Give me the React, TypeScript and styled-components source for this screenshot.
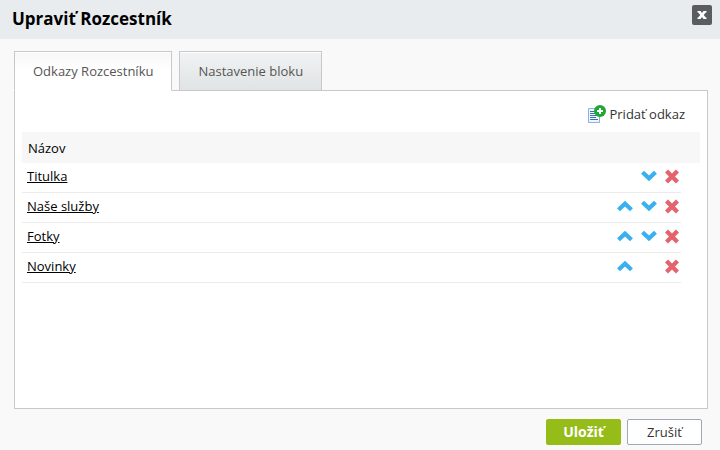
import React, { useState } from "react";
import styled, { createGlobalStyle } from "styled-components";

const GlobalStyle = createGlobalStyle`
  *, *::before, *::after { box-sizing: border-box; }
  body {
    margin: 0;
    background: #f9f9f9;
    color: #000;
    font: 13px/20px "Open Sans", "Noto Sans", sans-serif;
  }
  button { font: inherit; cursor: pointer; }
`;

const Dialog = styled.div`
  display: flex;
  flex-direction: column;
  min-height: 100vh;
`;

const Header = styled.header`
  display: flex;
  align-items: flex-start;
  justify-content: space-between;
  height: 39px;
  padding: 5px 8px 0 12px;
  background: #e8ecef;
`;

const Title = styled.h1`
  margin: 0;
  font-size: 17px;
  line-height: 28px;
  font-weight: 700;
`;

const IconButton = styled.button`
  display: flex;
  align-items: center;
  justify-content: center;
  padding: 0;
  border: 0;
  background: none;
`;

const CloseButton = styled(IconButton)`
  width: 20px;
  height: 20px;
  border-radius: 2px;
  background: #595d60;
`;

const Main = styled.main`
  display: flex;
  flex: 1;
  flex-direction: column;
  padding: 12px 12px 0 14px;
`;

const Tabs = styled.div`
  display: flex;
  gap: 7px;
`;

const Tab = styled.button<{ $active: boolean }>`
  z-index: 1;
  height: 40px;
  margin: 0 0 -1px;
  padding: 0 18px;
  border: 1px solid #c8c8c8;
  border-bottom-color: ${(p) => (p.$active ? "#fff" : "#c8c8c8")};
  background: ${(p) =>
    p.$active
      ? "linear-gradient(#f7f7f7, #fff 50%)"
      : "linear-gradient(#f1f2f3, #e0e4e5)"};
  box-shadow: inset 0 1px #fff;
  color: #555;
`;

const Panel = styled.section`
  flex: 1;
  padding: 12px 7px;
  border: 1px solid #c8c8c8;
  background: #fff;
`;

const Toolbar = styled.div`
  display: flex;
  justify-content: flex-end;
  padding: 0 15px 7px 0;
`;

const AddButton = styled(IconButton)`
  gap: 3px;
  height: 22px;
  color: #333;
`;

const Table = styled.table`
  width: 100%;
  border-collapse: separate;
  border-spacing: 0;
`;

const HeadCell = styled.th`
  height: 31px;
  padding: 0 6px;
  background: #f7f7f7;
  font-weight: 400;
  text-align: left;
`;

const Cell = styled.td`
  height: 30px;
  padding: 0 0 4px 5px;
  border-bottom: 1px solid #ebebeb;
`;

const ActionCell = styled(Cell)`
  width: 72px;
  padding: 0 2px 4px 0;
`;

const GutterCell = styled.td`
  width: 19px;
  padding: 0;
`;

const ItemLink = styled.a`
  color: #000;
  text-decoration: underline;
`;

const Actions = styled.div`
  display: grid;
  grid-template-columns: 16px 16px 14px;
  gap: 8px;
  justify-content: end;
`;

const ActionButton = styled(IconButton)<{ $column: number }>`
  grid-column: ${(p) => p.$column};
  grid-row: 1;
  height: 20px;
`;

const Footer = styled.footer`
  display: flex;
  justify-content: flex-end;
  gap: 6px;
  padding: 10px 18px 5px;
`;

const FooterButton = styled.button<{ $primary?: boolean }>`
  min-width: 75px;
  height: 26px;
  padding: 0 12px;
  border: 1px solid ${(p) => (p.$primary ? "#95bc19" : "#a1a7b4")};
  border-radius: 2px;
  background: ${(p) => (p.$primary ? "#95bc19" : "#fff")};
  color: ${(p) => (p.$primary ? "#fff" : "#333")};
  font-size: ${(p) => (p.$primary ? "14px" : "13px")};
  font-weight: ${(p) => (p.$primary ? 700 : 400)};
`;

const CloseIcon = () => (
  <svg width="10" height="8" viewBox="0 0 10 8" aria-hidden="true">
    <path d="M.5 0h3L5 1.9 6.5 0h3v1.5h-.7L6.7 4l2.1 2.5h.7V8h-3L5 6.1 3.5 8h-3V6.5h.7L3.3 4 1.2 1.5H.5z" fill="#fff" />
  </svg>
);

const Chevron = ({ up }: { up?: boolean }) => (
  <svg width="16" height="12" viewBox="0 0 16 12" aria-hidden="true">
    <path
      d={up ? "M1.5 9.7 8 3.6l6.5 6.1" : "M1.5 2.3 8 8.4l6.5-6.1"}
      fill="none"
      stroke="#3bb0f0"
      strokeWidth="4.2"
    />
  </svg>
);

const DeleteIcon = () => (
  <svg width="14" height="16" viewBox="0 0 14 16" aria-hidden="true">
    <path d="m1.5 3 11 11m0-11-11 11" fill="none" stroke="#e4636d" strokeWidth="4.4" />
  </svg>
);

const AddLinkIcon = () => (
  <svg width="19" height="20" viewBox="0 0 19 20" aria-hidden="true">
    <path d="M1.5 4.5h11v14h-11z" fill="#eef6ff" stroke="#8ab1df" />
    <path d="M3 7.5h6M3 9.5h5M3 11.5h8M3 13.5h6M3 15.5h8" stroke="#426dae" />
    <circle cx="13" cy="7" r="6" fill="#1fa734" />
    <path d="M13 4v6M10 7h6" stroke="#fff" strokeWidth="2" />
  </svg>
);

const tabs = ["Odkazy Rozcestníku", "Nastavenie bloku"];
const items = ["Titulka", "Naše služby", "Fotky", "Novinky"];

export default function App() {
  const [active, setActive] = useState(0);
  return (
    <>
      <GlobalStyle />
      <Dialog role="dialog" aria-labelledby="dialog-title">
        <Header>
          <Title id="dialog-title">Upraviť Rozcestník</Title>
          <CloseButton type="button" aria-label="Zavrieť">
            <CloseIcon />
          </CloseButton>
        </Header>
        <Main>
          <Tabs role="tablist">
            {tabs.map((label, i) => (
              <Tab
                key={label}
                type="button"
                role="tab"
                aria-selected={active === i}
                $active={active === i}
                onClick={() => setActive(i)}
              >
                {label}
              </Tab>
            ))}
          </Tabs>
          <Panel role="tabpanel" aria-label={tabs[active]}>
            <Toolbar>
              <AddButton type="button">
                <AddLinkIcon />
                Pridať odkaz
              </AddButton>
            </Toolbar>
            <Table>
              <thead>
                <tr>
                  <HeadCell colSpan={3}>Názov</HeadCell>
                </tr>
              </thead>
              <tbody>
                {items.map((name, i) => (
                  <tr key={name}>
                    <Cell>
                      <ItemLink href="#">{name}</ItemLink>
                    </Cell>
                    <ActionCell>
                      <Actions>
                        {i > 0 && (
                          <ActionButton type="button" $column={1} aria-label={`Posunúť vyššie: ${name}`}>
                            <Chevron up />
                          </ActionButton>
                        )}
                        {i < items.length - 1 && (
                          <ActionButton type="button" $column={2} aria-label={`Posunúť nižšie: ${name}`}>
                            <Chevron />
                          </ActionButton>
                        )}
                        <ActionButton type="button" $column={3} aria-label={`Odstrániť: ${name}`}>
                          <DeleteIcon />
                        </ActionButton>
                      </Actions>
                    </ActionCell>
                    <GutterCell />
                  </tr>
                ))}
              </tbody>
            </Table>
          </Panel>
        </Main>
        <Footer>
          <FooterButton type="button" $primary>
            Uložiť
          </FooterButton>
          <FooterButton type="button">Zrušiť</FooterButton>
        </Footer>
      </Dialog>
    </>
  );
}
